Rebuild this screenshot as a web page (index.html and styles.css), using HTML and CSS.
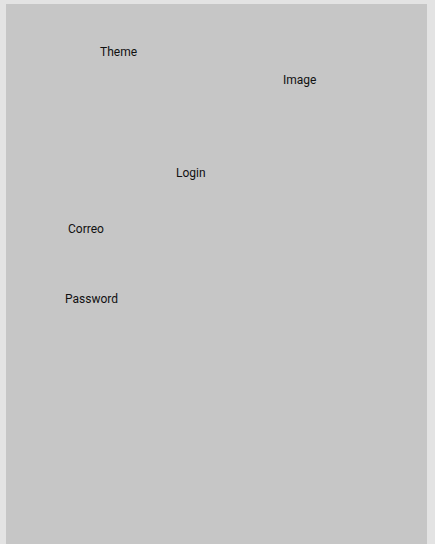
FILE: index.html
```html
<!DOCTYPE html>
<html lang="es">
<head>
<meta charset="utf-8">
<title>Login</title>
<link rel="stylesheet" href="styles.css">
</head>
<body>
<main class="panel">
  <div class="label label-theme">Theme</div>
  <div class="label label-image">Image</div>
  <div class="label label-login">Login</div>
  <div class="label label-correo">Correo</div>
  <div class="label label-password">Password</div>
</main>
</body>
</html>
```

FILE: styles.css
```css
html, body {
  background: #e3e3e3;
}
body {
  margin: 4px 8px 0 6px;
  font-family: Roboto, "Liberation Sans", sans-serif;
  font-size: 12px;
  color: #111;
}
.panel {
  background: #c6c6c6;
  min-height: 540px;
  padding-top: 40px;
  box-sizing: border-box;
  display: flex;
  flex-direction: column;
  align-items: flex-start;
}
.label {
  line-height: 16px;
  height: 16px;
}
.label-theme { margin-left: 94px; }
.label-image { margin-left: 277px; margin-top: 12px; }
.label-login { margin-left: 170px; margin-top: 77px; }
.label-correo { margin-left: 62px; margin-top: 40px; }
.label-password { margin-left: 59px; margin-top: 54px; }
```
